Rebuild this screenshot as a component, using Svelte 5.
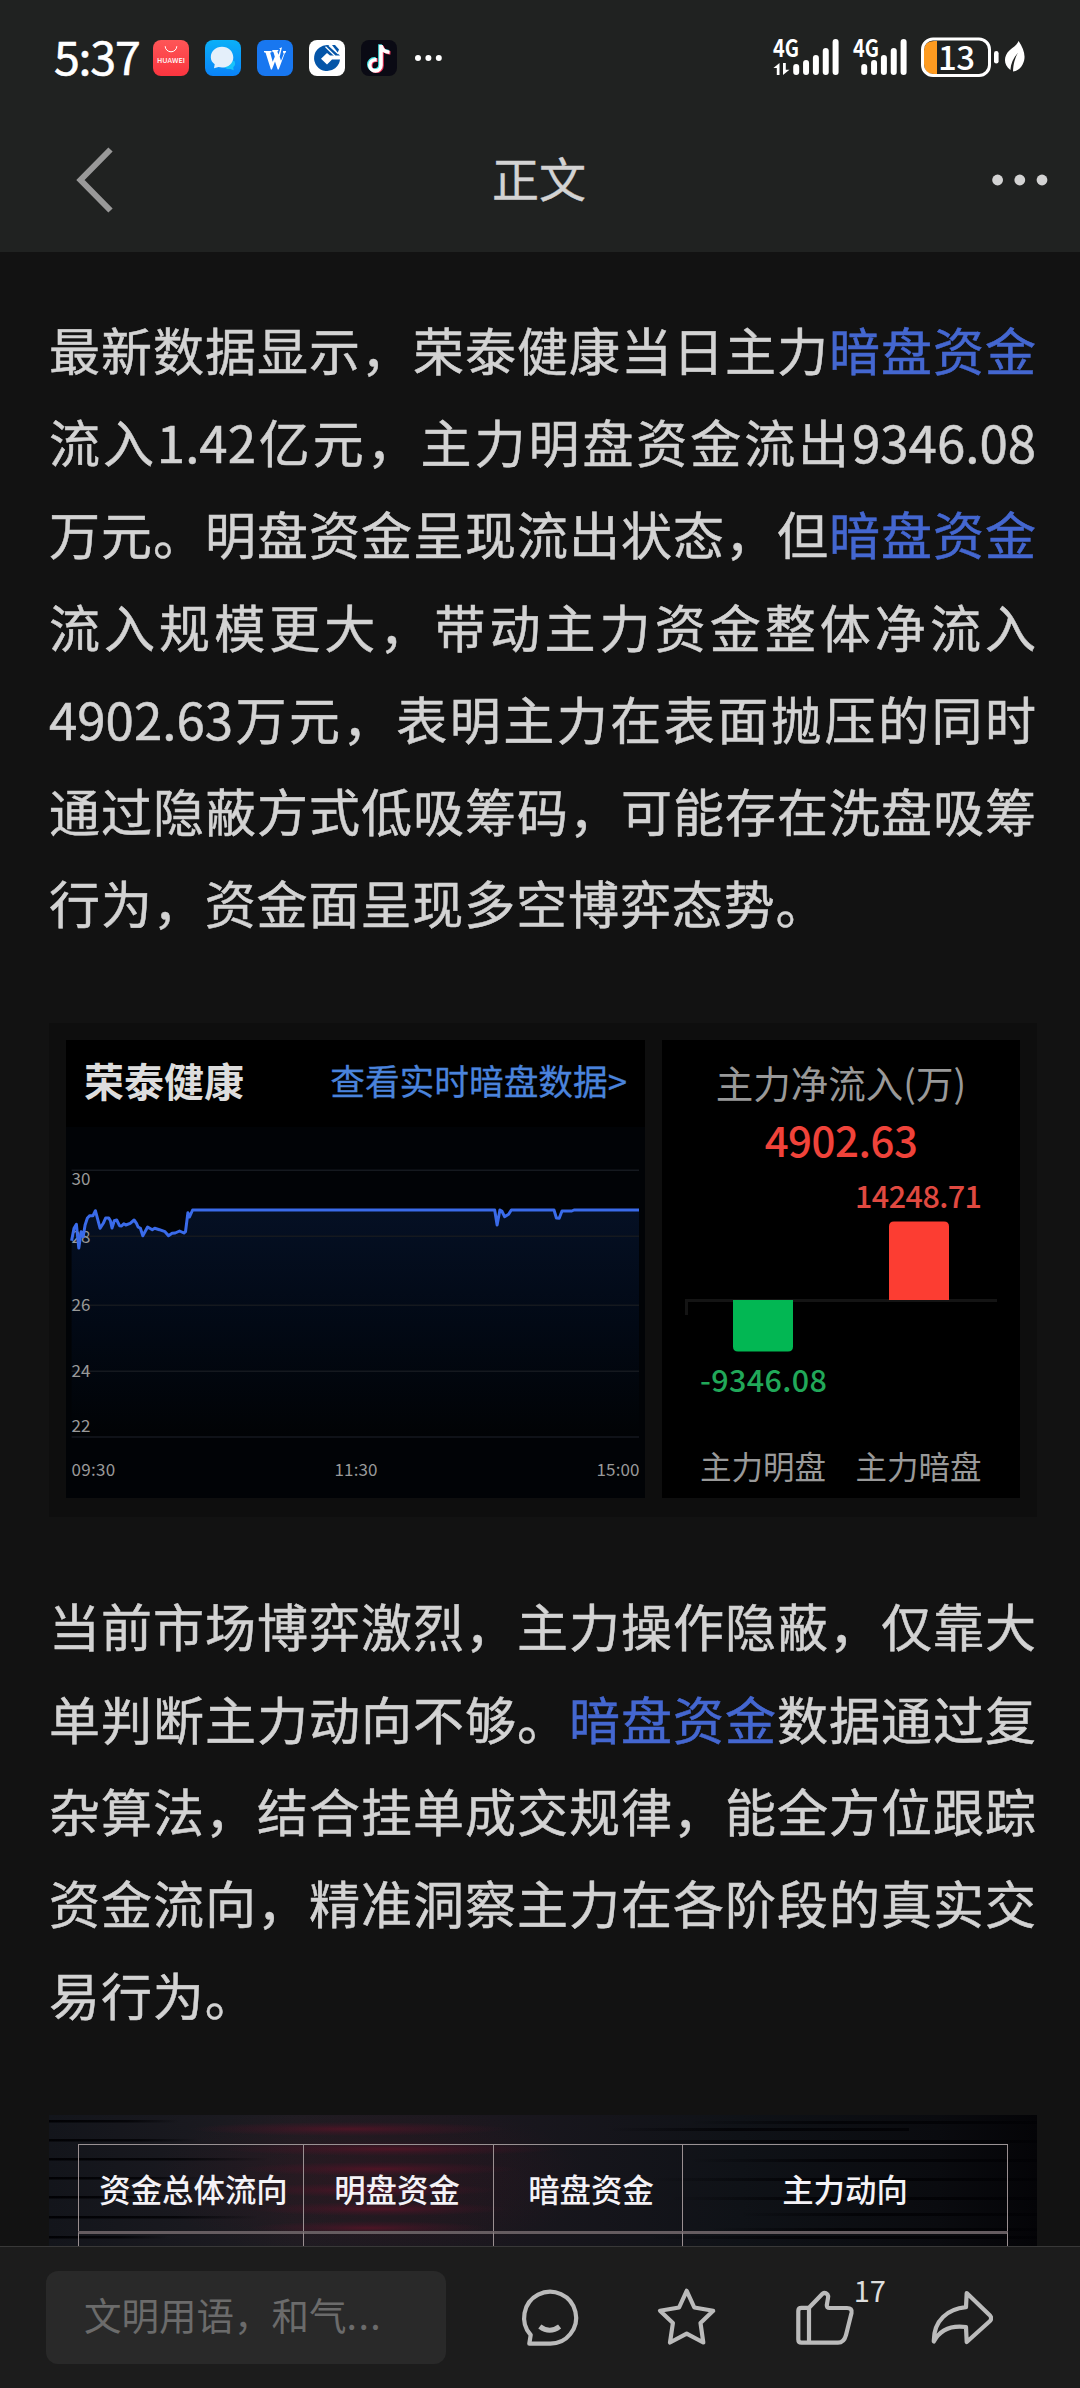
<script lang="ts">
  type Segment = { text: string; link?: boolean };

  const intro: Segment[][] = [
    [{ text: '最新数据显示，荣泰健康当日主力' }, { text: '暗盘资金', link: true }],
    [{ text: '流入1.42亿元，主力明盘资金流出9346.08' }],
    [{ text: '万元。明盘资金呈现流出状态，但' }, { text: '暗盘资金', link: true }],
    [{ text: '流入规模更大，带动主力资金整体净流入' }],
    [{ text: '4902.63万元，表明主力在表面抛压的同时' }],
    [{ text: '通过隐蔽方式低吸筹码，可能存在洗盘吸筹' }],
    [{ text: '行为，资金面呈现多空博弈态势。' }],
  ];

  const analysis: Segment[][] = [
    [{ text: '当前市场博弈激烈，主力操作隐蔽，仅靠大' }],
    [{ text: '单判断主力动向不够。' }, { text: '暗盘资金', link: true }, { text: '数据通过复' }],
    [{ text: '杂算法，结合挂单成交规律，能全方位跟踪' }],
    [{ text: '资金流向，精准洞察主力在各阶段的真实交' }],
    [{ text: '易行为。' }],
  ];

  const gridLines = [43.3, 109.3, 178.3, 244.3, 310];
  const priceLabels = [
    { value: '30', y: 58 },
    { value: '28', y: 116 },
    { value: '26', y: 184 },
    { value: '24', y: 250 },
    { value: '22', y: 305 },
  ];

  const price =
    '5.6,113.7 8,101.3 10.4,97.3 12.8,121 15.1,104.7 17.1,109.7 19.1,98 21.4,91 23.8,88.7 27,88.7 29.4,83.7 ' +
    '34.1,101.3 37.3,96.3 39.6,91 42.8,91 44.4,93.7 46,101 48.3,93.7 50.7,93 53.5,98.7 55.5,99 57.8,96.7 59.8,98 ' +
    '64.2,96.3 68.1,93 70.5,96.3 72.1,100 74.4,101.3 76.8,108.7 81.6,100 86.3,102.7 88.7,101.3 93.4,102.7 99,104.7 ' +
    '102.5,108.7 106.1,106.3 109.2,106 113.6,104 117.9,106 119.5,104.7 121.9,85.7 123.5,90 126.6,83 428.7,83 ' +
    '431.1,98 433.9,83 435.8,84 438.6,89.7 442.6,87.3 445.3,83 488,83 490.4,91 493.2,91.3 496,84 505.8,84 508,83 573,83';

  const columns = ['资金总体流向', '明盘资金', '暗盘资金', '主力动向'];

  // signal bar tops, short to tall
  const signal = [64, 60, 55, 48, 39];

  // dark streaks across the table banner: x, y, width
  const leftStreaks = [[0, 5, 130], [0, 24, 150], [0, 43, 220], [0, 62, 160], [0, 81, 130], [0, 101, 210], [0, 121, 120]];
  const rightStreaks = [
    [640, 6, 348], [560, 13, 300], [560, 25, 428], [640, 44, 348], [600, 63, 388], [620, 82, 368], [690, 98, 298], [660, 113, 328], [600, 121, 388],
  ];
  // red light trails: centre x, y, width
  const glows = [
    [300, 14, 320], [340, 34, 340], [330, 54, 280], [320, 75, 260], [330, 94, 260], [320, 113, 240],
  ];

  let likes = $state(17);
  let liked = $state(false);

  function toggleLike() {
    liked = !liked;
    likes += liked ? 1 : -1;
  }
</script>

{#snippet paragraph(lines: Segment[][])}
  <p class="paragraph">
    {#each lines as line}
      <span class="line">{#each line as part}{#if part.link}<span class="link">{part.text}</span>{:else}{part.text}{/if}{/each}</span>
    {/each}
  </p>
{/snippet}

<main class="screen">
  <header class="top">
    <div class="status">
      <span class="time">5:37</span>
      <div class="apps">
        <svg viewBox="0 0 36 36">
          <defs>
            <linearGradient id="hw" x1="0" y1="0" x2="0" y2="1"><stop offset="0" stop-color="#fe5657" /><stop offset="1" stop-color="#fa353f" /></linearGradient>
          </defs>
          <rect width="36" height="36" rx="8" fill="url(#hw)" />
          <path d="M12.2 6.2a5.8 5.6 0 0 0 11.6 0" fill="none" stroke="#fff" stroke-width="1" />
          <text x="18" y="22.8" text-anchor="middle" font-size="6.6" font-weight="500" textLength="28" lengthAdjust="spacingAndGlyphs" fill="#fff">HUAWEI</text>
        </svg>
        <svg viewBox="0 0 36 36">
          <defs>
            <linearGradient id="msg" x1="0" y1="0" x2="0" y2="1"><stop offset="0" stop-color="#0bb0f8" /><stop offset="1" stop-color="#0a83f8" /></linearGradient>
          </defs>
          <rect width="36" height="36" rx="8" fill="url(#msg)" />
          <path d="M29 20.500c2 3 1 5.500-.7 6.500l.3 3.300-3-1.400c-3 .6-6-.5-7-3z" fill="#18c3fb" />
          <path d="M17 6.800c6.300 0 11.300 4.600 11.300 10.600S23.300 27.500 17 27.500c-1.200 0-2.400 0-3.500-.4L9 28.300l.7-4C7.200 22.500 5.800 20 5.800 17.200 5.800 11.300 10.700 6.800 17 6.800z" fill="#e4effa" />
        </svg>
        <svg viewBox="0 0 36 36">
          <rect width="36" height="36" rx="8" fill="#1877f0" />
          <path d="M7 11h7.500v1.200l-1.300.5 2.500 9 2.100-5-1.300-4.500-1.200-.5V10h6v1l-1 .5 1.200 3.200 1.700-5.500-1.100-.7L25 7.300l-2.300 9.500 1.300 4 2.800-7-.8-1.500V11H29v1.300l-1.100.7-6.200 16.500h-1L18 21.400l-3.100 8.200h-1L8.600 12.800 7 12.200z" fill="#fff" />
        </svg>
        <svg viewBox="0 0 36 36">
          <rect width="36" height="36" rx="8" fill="#fff" />
          <path d="M20 5.200a13 13 0 1 0 11 14.300H23l-5 5-6-5.800 6-5.800 3 2.700h10L20 5.200z" fill="#0455a8" />
          <path d="M20 5.500 29.500 14M16.500 6.800 26 16" stroke="#fff" stroke-width="1.200" />
          <path d="M23 5h3l4 4.500-1.300 3z" fill="#0455a8" />
        </svg>
        <svg viewBox="0 0 36 36">
          <rect width="36" height="36" rx="8" fill="#0a0a14" />
          <g fill="none" stroke-width="3.600">
            <path d="M19 4.200v20.300a5.600 5.600 0 1 1-5.600-5.600h1.300M19 4.500c.7 4 3.500 6.600 8.500 7" stroke="#43e5e6" />
            <path d="M21 5.700v20a5.600 5.600 0 1 1-5.600-5.600h1.300M21 6c.7 4 3.500 6.600 8.500 7" stroke="#ee3358" />
            <path d="M20 5v20.300a5.600 5.600 0 1 1-5.600-5.600h1.300M20 5.200c.7 4 3.500 6.600 8.500 7" stroke="#fff" />
          </g>
        </svg>
      </div>
      <svg class="overflow" viewBox="0 0 28 8" fill="#fff">
        <circle cx="4" cy="4" r="3" /><circle cx="14.400" cy="4" r="3" /><circle cx="24.800" cy="4" r="3" />
      </svg>
      <svg class="indicators" viewBox="770 30 258 54" fill="#fff">
        <text x="773" y="57" font-size="24" font-weight="700" textLength="26" lengthAdjust="spacingAndGlyphs">4G</text>
        <path d="M779.500 63v12h-2.700v-7h-3.400zM783 63v12l6.500-5.200h-3.700V63z" />
        {#each signal as top, i}
          <rect x={793.2 + i * 9.85} y={top} width="6" height={75 - top} rx="3" />
        {/each}
        <text x="853" y="57" font-size="24" font-weight="700" textLength="26" lengthAdjust="spacingAndGlyphs">4G</text>
        {#each signal as top, i}
          <rect x={861.2 + i * 9.85} y={top} width="6" height={75 - top} rx="3" />
        {/each}
        <path d="M937 41v33h-3q-10 0-10-10V51q0-10 10-10z" fill="#fe9b20" />
        <rect x="922.500" y="39" width="67" height="36.500" rx="10.500" fill="none" stroke="#fff" stroke-width="3" />
        <text x="938" y="69.500" font-size="33" font-weight="500" textLength="37">13</text>
        <rect x="994" y="51" width="4.600" height="12.500" rx="2.300" />
        <path d="M1018.600 41c5.400 8 8 16 4 23.500-2.300 4.200-5.600 6.600-9.600 7 .3-8 2-13 4.700-18.500-4.500 5.200-6.800 10.500-7.300 17-7.700-5.800-6.500-14.500-1-19.500 4-3.500 7.600-5.500 9.200-9.500z" />
      </svg>
    </div>

    <nav class="nav">
      <button class="icon-button back" aria-label="返回">
        <svg viewBox="0 0 38 68" fill="none" stroke="#999" stroke-width="6"><path d="M34.500 3.500 4.500 34l30 30.500" /></svg>
      </button>
      <h1>正文</h1>
      <button class="icon-button more" aria-label="更多">
        <svg viewBox="0 0 56 12" fill="#d3d3d3"><circle cx="5.600" cy="6" r="5.400" /><circle cx="27.800" cy="6" r="5.400" /><circle cx="50" cy="6" r="5.400" /></svg>
      </button>
    </nav>
  </header>

  <article class="article">
    {@render paragraph(intro)}

    <section class="cards">
      <div class="card trend">
        <div class="card-head">
          <strong>荣泰健康</strong>
          <span class="more-link">查看实时暗盘数据&gt;</span>
        </div>
        <svg class="chart" viewBox="0 0 579 371">
          <defs>
            <linearGradient id="area" x1="0" y1="83" x2="0" y2="310" gradientUnits="userSpaceOnUse">
              <stop offset="0" stop-color="#051024" />
              <stop offset="0.500" stop-color="#020915" />
              <stop offset="1" stop-color="#010305" />
            </linearGradient>
          </defs>
          <rect width="579" height="371" fill="#010306" />
          <polygon points="5.6,310 {price} 573,310" fill="url(#area)" />
          {#each gridLines as y}
            <line x1="5.600" x2="573" y1={y} y2={y} stroke="#15191f" stroke-width="1.500" />
          {/each}
          <g class="axis-text">
            {#each priceLabels as label}
              <text x="5.600" y={label.y}>{label.value}</text>
            {/each}
            <text x="5.600" y="349" textLength="43.500">09:30</text>
            <text x="268.500" y="349" textLength="43">11:30</text>
            <text x="530.500" y="349" textLength="43">15:00</text>
          </g>
          <polyline points={price} fill="none" stroke="#3a6bea" stroke-width="3" stroke-linejoin="round" />
        </svg>
      </div>

      <div class="card flow">
        <span class="flow-title">主力净流入(万)</span>
        <span class="flow-total">4902.63</span>
        <svg class="bars" viewBox="0 0 358 332">
          <path d="M24.500 149v-14.500H335" fill="none" stroke="#141414" stroke-width="3" />
          <path d="M227 134V60.500q0-5 5-5h50q5 0 5 5V134z" fill="#fc3d32" />
          <path d="M71 134h60v46.500q0 5-5 5H76q-5 0-5-5z" fill="#02b753" />
          <text class="value" x="193" y="42" textLength="127" fill="#e04940">14248.71</text>
          <text class="value" x="38" y="226" textLength="127" fill="#21a859">-9346.08</text>
          <g fill="#999">
            <text x="38" y="313" textLength="126">主力明盘</text>
            <text x="193.500" y="313" textLength="126">主力暗盘</text>
          </g>
        </svg>
      </div>
    </section>

    {@render paragraph(analysis)}

    <section class="banner">
      <svg class="backdrop" viewBox="0 0 988 131" preserveAspectRatio="none">
        <defs>
          <linearGradient id="base" x1="0" x2="1">
            <stop offset="0" stop-color="#13151b" />
            <stop offset="0.250" stop-color="#1e1c22" />
            <stop offset="0.450" stop-color="#1a171e" />
            <stop offset="0.700" stop-color="#0f1217" />
            <stop offset="0.900" stop-color="#0a0b0f" />
            <stop offset="1" stop-color="#040407" />
          </linearGradient>
          <linearGradient id="fade-right" x1="0" x2="1">
            <stop offset="0" stop-color="#020205" />
            <stop offset="0.600" stop-color="#020205" stop-opacity="0.800" />
            <stop offset="1" stop-color="#020205" stop-opacity="0" />
          </linearGradient>
          <linearGradient id="fade-left" x1="0" x2="1">
            <stop offset="0" stop-color="#020205" stop-opacity="0" />
            <stop offset="0.400" stop-color="#020205" stop-opacity="0.800" />
            <stop offset="1" stop-color="#020205" stop-opacity="0.900" />
          </linearGradient>
          <radialGradient id="trail">
            <stop offset="0" stop-color="#6a1228" stop-opacity="0.600" />
            <stop offset="0.500" stop-color="#5a1228" stop-opacity="0.300" />
            <stop offset="1" stop-color="#5a1228" stop-opacity="0" />
          </radialGradient>
          <radialGradient id="haze">
            <stop offset="0" stop-color="#3a1520" stop-opacity="0.450" />
            <stop offset="1" stop-color="#3a1520" stop-opacity="0" />
          </radialGradient>
        </defs>
        <rect width="988" height="131" fill="url(#base)" />
        <ellipse cx="320" cy="65" rx="220" ry="80" fill="url(#haze)" />
        {#each glows as [x, y, w]}
          <ellipse cx={x} cy={y} rx={w / 2} ry="7" fill="url(#trail)" />
        {/each}
        {#each leftStreaks as [x, y, w]}
          <rect {x} {y} width={w} height="2.500" fill="url(#fade-right)" />
        {/each}
        {#each rightStreaks as [x, y, w]}
          <rect {x} {y} width={w} height="3" fill="url(#fade-left)" />
        {/each}
      </svg>
      <div class="table">
        {#each columns as column}
          <span class="cell">{column}</span>
        {/each}
        {#each columns as _}
          <span class="cell"></span>
        {/each}
      </div>
    </section>
  </article>

  <footer class="toolbar">
    <div class="comment-box">文明用语，和气<span class="dots">...</span></div>
    <div class="actions">
      <button class="icon-button" aria-label="评论">
        <svg viewBox="520 2286 62 62">
          <path d="M550.700 2343.700H530.300L531.700 2335A26 26 0 1 1 550.700 2343.700z" />
          <path d="M540.800 2326.500q9.900 7.600 19.800 0" stroke-width="5" />
        </svg>
      </button>
      <button class="icon-button" aria-label="收藏">
        <svg viewBox="658 2286 62 62">
          <path d="M688.700 2290.800 696.300 2307.500 715.200 2310.800 702.500 2323 705.300 2342.500 688.700 2333.600 672 2342.500 674.900 2323 662 2310.800 681.100 2307.500z" />
        </svg>
      </button>
      <button class="icon-button like" aria-label="点赞" onclick={toggleLike}>
        <svg viewBox="796 2286 62 62">
          <path d="M803.500 2307.800H811L824.500 2293.700Q827 2292 829.500 2294.500 830.500 2296 830 2298L828.800 2305Q828.700 2308 831.500 2308H849Q854.500 2308 853.500 2313L848 2335Q846 2342.700 840 2342.700H803.500Q800.300 2342.700 800.300 2339.500V2311Q800.300 2307.800 803.500 2307.800zM811 2307.800V2342.700" />
        </svg>
        <span class="count">{likes}</span>
      </button>
      <button class="icon-button" aria-label="分享">
        <svg viewBox="933 2286 62 62">
          <path d="M968.700 2293 992 2315.500Q994.300 2318.300 992 2321L968.700 2342 968 2327Q945 2324 935.800 2341.500C935.500 2320 950 2309 968 2307.200z" />
        </svg>
      </button>
    </div>
  </footer>
</main>

<style>
  :global(body) {
    background: #121212;
  }

  .screen {
    width: 1080px;
    height: 2388px;
    display: flex;
    flex-direction: column;
    overflow: hidden;
    background: #121212;
    color: #d3d3d3;
    font-family: "Noto Sans CJK SC", "Noto Sans", sans-serif;
  }

  .icon-button {
    padding: 0;
    border: none;
    background: none;
    display: flex;
    font: inherit;
    color: inherit;
    cursor: pointer;
  }

  .top {
    flex: none;
    height: 252px;
    background: #202221;
  }

  .status {
    display: flex;
    align-items: center;
    height: 116px;
    padding-left: 54px;
  }

  .time {
    width: 99px;
    font-size: 46.500px;
    letter-spacing: -1.200px;
    line-height: 116px;
    margin-top: -7px;
    color: #fff;
    -webkit-text-stroke: 0.600px #fff;
  }

  .apps {
    display: flex;
    gap: 16px;
  }

  .apps svg {
    width: 36px;
    height: 36px;
  }

  .overflow {
    width: 28px;
    height: 8px;
    margin-left: 17px;
  }

  .indicators {
    width: 258px;
    height: 54px;
    margin-left: auto;
    margin-right: 52px;
    margin-top: -2px;
  }

  .nav {
    display: flex;
    align-items: center;
    justify-content: space-between;
    height: 128px;
    padding: 0 32px 0 76px;
  }

  .back {
    width: 56px;
  }

  .back svg {
    width: 38px;
    height: 68px;
  }

  .more svg {
    width: 56px;
    height: 12px;
  }

  h1 {
    margin: -7px 0 0;
    padding-right: 46px;
    font-size: 47px;
    font-weight: 400;
    line-height: 60px;
    -webkit-text-stroke: 0.400px #d3d3d3;
  }

  .article {
    flex: 1;
    min-height: 0;
    overflow: hidden;
    padding: 51px 43px 0 49px;
  }

  .paragraph {
    margin: 0;
    width: 987px;
    font-size: 51px;
    line-height: 92.200px;
    -webkit-text-stroke: 0.500px;
  }

  .line {
    display: block;
    white-space: nowrap;
    text-align: justify;
    text-align-last: justify;
  }

  .line:last-child {
    letter-spacing: 0.900px;
    text-align-last: left;
  }

  .link {
    color: #4467d0;
  }

  .cards {
    display: flex;
    gap: 17px;
    width: 988px;
    height: 494px;
    box-sizing: border-box;
    margin: 75px 0 62px;
    padding: 17px 17px 18px;
    background: #0e0e0e;
  }

  .card {
    background: #000;
    height: 458px;
  }

  .trend {
    width: 579px;
  }

  .card-head {
    display: flex;
    align-items: center;
    justify-content: space-between;
    height: 87px;
    box-sizing: border-box;
    padding: 0 18px 7px;
  }

  .card-head strong {
    font-size: 40px;
    line-height: 60px;
    color: #ddd;
  }

  .more-link {
    font-size: 34.700px;
    line-height: 60px;
    color: #4a83dc;
    -webkit-text-stroke: 0.300px;
  }

  .chart {
    display: block;
    width: 579px;
    height: 371px;
  }

  .axis-text {
    font-size: 17px;
    fill: #999;
  }

  .flow {
    width: 358px;
    display: flex;
    flex-direction: column;
    align-items: center;
  }

  .flow-title {
    margin-top: 13px;
    font-size: 37.500px;
    line-height: 58px;
    color: #999;
  }

  .flow-total {
    font-size: 42px;
    font-weight: 500;
    line-height: 55px;
    letter-spacing: -0.500px;
    color: #f0433a;
  }

  .bars {
    width: 358px;
    height: 332px;
    font-size: 31.500px;
  }

  .value {
    font-size: 30.500px;
    font-weight: 500;
  }

  .banner {
    position: relative;
    width: 988px;
    height: 200px;
    margin-top: 75px;
  }

  .backdrop {
    position: absolute;
    inset: 0;
    width: 988px;
    height: 131px;
  }

  .table {
    position: relative;
    display: grid;
    grid-template-columns: 225px 190px 189px 326px;
    grid-template-rows: 87px 80px;
    width: 930px;
    margin-left: 29px;
    padding-top: 29px;
  }

  .cell {
    display: flex;
    align-items: center;
    justify-content: center;
    border-top: 1.500px solid #9a9294;
    border-left: 1.500px solid #9a8f91;
    font-size: 31.400px;
    font-weight: 500;
    color: #f4f2f6;
  }

  .cell:nth-child(1) {
    padding-left: 5px;
  }

  .cell:nth-child(2) {
    padding-right: 3px;
  }

  .cell:nth-child(3) {
    padding-left: 6px;
  }

  .cell:nth-child(4n) {
    border-right: 1.500px solid #9a8f91;
  }

  .cell:nth-child(n + 5) {
    border-top: 3px solid #655c60;
  }

  .toolbar {
    flex: none;
    display: flex;
    height: 142px;
    box-sizing: border-box;
    border-top: 1px solid #383838;
    padding: 24px 87px 0 46px;
    background: #1c1c1c;
  }

  .comment-box {
    width: 400px;
    height: 93px;
    box-sizing: border-box;
    padding-left: 38px;
    border-radius: 12px;
    background: #292929;
    font-size: 37.500px;
    line-height: 85px;
    color: #6b6b6b;
  }

  .dots {
    letter-spacing: 1.500px;
  }

  .actions {
    flex: 1;
    display: flex;
    justify-content: space-between;
    padding-left: 73px;
    padding-top: 15px;
  }

  .actions svg {
    width: 62px;
    height: 62px;
    fill: none;
    stroke: #bbb;
    stroke-width: 4.200;
    stroke-linejoin: round;
  }

  .like {
    position: relative;
    height: 62px;
  }

  .count {
    position: absolute;
    left: 60px;
    top: -15px;
    font-size: 29px;
    line-height: 36px;
    color: #ddd;
  }
</style>
